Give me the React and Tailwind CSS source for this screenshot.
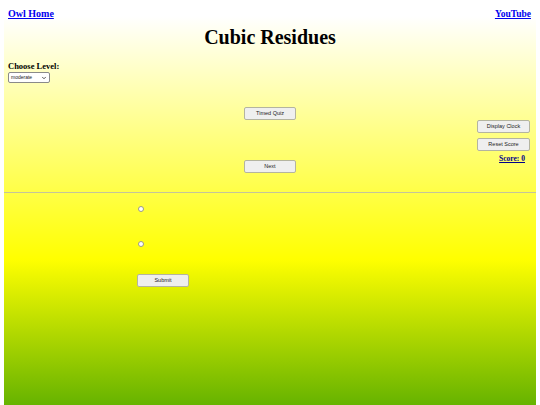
import { ChevronDown } from 'lucide-react';

const serif = "font-['Liberation_Serif','Times_New_Roman',serif]";
const sans = "font-['Liberation_Sans',Arial,sans-serif]";

function QuizButton({ label, className = '' }) {
  return (
    <button
      className={`${sans} w-[52px] h-[13px] bg-[#efefef] border border-[#b4b4a0] rounded-[2px] text-[5.5px] leading-none text-[#222] flex items-center justify-center ${className}`}
    >
      {label}
    </button>
  );
}

export default function App() {
  return (
    <div className="bg-white px-[4px] min-h-[405px]">
      <main className={`${serif} min-h-[405px] bg-[linear-gradient(to_bottom,#ffffff_4%,#ffff00_64%,#66b300_100%)] text-black`}>
        {/* Header links */}
        <div className="flex justify-between pl-[4px] pr-[5px] pt-[8px]">
          <a href="#" className="text-[10px] leading-[12px] font-bold text-[#0000ee] underline">Owl Home</a>
          <a href="#" className="text-[9.5px] leading-[12px] font-bold text-[#0000ee] underline">YouTube</a>
        </div>

        <h1 className="mt-[5px] text-center text-[20px] leading-[24px] font-bold">Cubic Residues</h1>

        {/* Level picker */}
        <div className="pl-[4px] mt-[12px]">
          <div className="text-[8.5px] leading-[10px] font-bold">Choose Level:</div>
          <div className={`${sans} mt-[1px] w-[42px] h-[11px] bg-white border border-[#8a8a8a] rounded-[2px] flex items-center justify-between pl-[2px] pr-[2px] text-[5px] text-[#222]`}>
            <span>moderate</span>
            <ChevronDown className="w-[6px] h-[6px]" strokeWidth={3} />
          </div>
        </div>

        {/* Controls */}
        <div className="mt-[24px] grid grid-cols-[1fr_auto_1fr]">
          <div />
          <div className="flex flex-col">
            <QuizButton label="Timed Quiz" />
            <QuizButton label="Next" className="mt-[40px]" />
          </div>
          <div className="flex flex-col items-end pt-[13px] pr-[6px]">
            <QuizButton label="Display Clock" className="h-[12px] w-[53px]" />
            <QuizButton label="Reset Score" className="h-[11px] w-[53px] mt-[5px]" />
            <a href="#" className="mt-[3px] mr-[5px] text-[7.5px] leading-[10px] font-bold text-[#00008b] underline">Score: 0</a>
          </div>
        </div>

        <div className="mt-[19px] border-t border-[#c4c49a]" />

        {/* Answers */}
        <div className="pl-[133px] pt-[13px] flex flex-col items-start">
          <input type="radio" name="answer" className="appearance-none ml-[1px] w-[6px] h-[6px] rounded-full bg-white border border-[#9a9a8a]" />
          <input type="radio" name="answer" className="appearance-none ml-[1px] mt-[29px] w-[6px] h-[6px] rounded-full bg-white border border-[#9a9a8a]" />
          <QuizButton label="Submit" className="mt-[27px]" />
        </div>
      </main>
    </div>
  );
}
